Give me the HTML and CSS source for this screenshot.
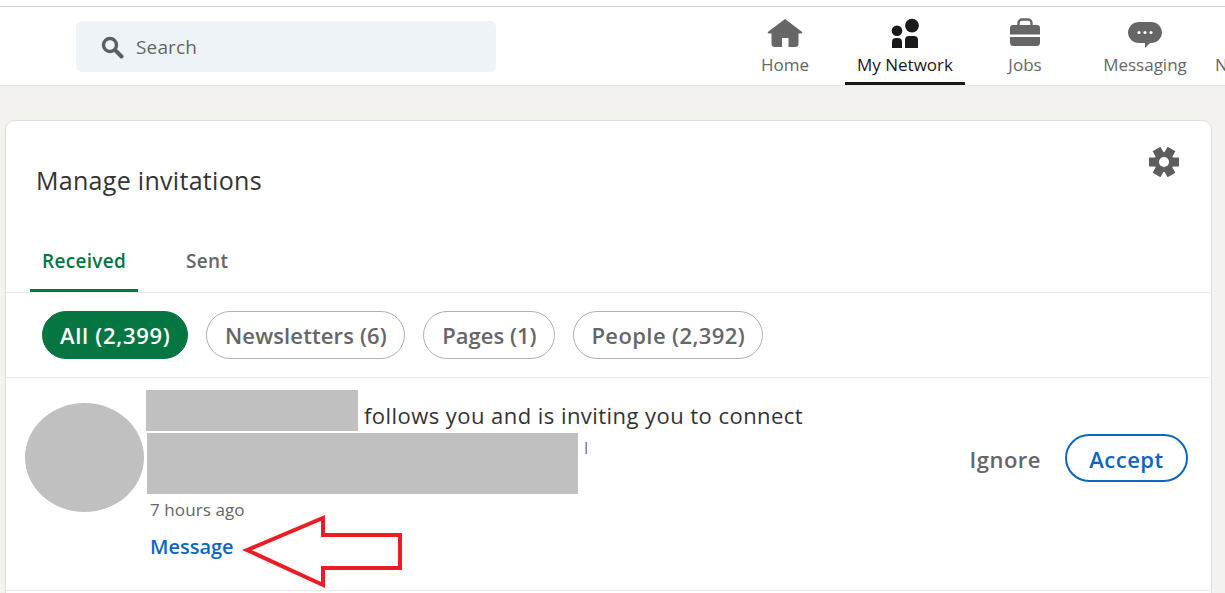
FILE: index.html
```html
<!DOCTYPE html>
<html lang="en">
<head>
    <meta charset="UTF-8">
    <title>Manage invitations</title>
    <link rel="stylesheet" href="styles.css">
</head>
<body>
    <header class="topbar">
        <div class="search">
            <svg class="search-icon" viewBox="0 0 24 24" width="24" height="24"><circle cx="10" cy="10" r="6.500" fill="none" stroke="#5e5e5e" stroke-width="3.400"/><path d="M15 15l6.500 6.500" stroke="#5e5e5e" stroke-width="4" stroke-linecap="round"/></svg>
            <span>Search</span>
        </div>
        <nav class="nav">
            <a class="nav-item">
                <svg viewBox="0 0 36 32" width="36" height="32"><path d="M18 2L1.500 14.500a1 1 0 0 0 .5 2H4.500v10A3.500 3.500 0 0 0 8 30h7V21h6.500v9H28a3.500 3.500 0 0 0 3.500-3.500v-10H34a1 1 0 0 0 .5-2z" fill="#666"/></svg>
                <span>Home</span>
            </a>
            <a class="nav-item active">
                <svg viewBox="0 0 36 32" width="36" height="32"><circle cx="10" cy="13.700" r="5.300" fill="#191919"/><circle cx="25" cy="8.700" r="6.900" fill="#191919"/><path d="M5 31v-6a4 4 0 0 1 4-4h2a4 4 0 0 1 4 4v6zM18 31v-8a4 4 0 0 1 4-4h5a4 4 0 0 1 4 4v8z" fill="#191919"/></svg>
                <span>My Network</span>
            </a>
            <a class="nav-item">
                <svg viewBox="0 0 36 32" width="36" height="32"><path d="M11.500 9V6a3.500 3.500 0 0 1 3.500-3.500h6A3.500 3.500 0 0 1 24.500 6v3" fill="none" stroke="#666" stroke-width="2.400"/><path d="M6 8h24a3 3 0 0 1 3 3v6.500H3V11a3 3 0 0 1 3-3zM3 20h30v5.500a3.500 3.500 0 0 1-3.500 3.500h-23A3.500 3.500 0 0 1 3 25.500z" fill="#666"/></svg>
                <span>Jobs</span>
            </a>
            <a class="nav-item">
                <svg viewBox="0 0 36 32" width="36" height="32"><path d="M12 5h12c6 0 11 4.700 11 10.500S30 26 24 26h-1l-5 5v-5h-6C6 26 1 21.300 1 15.500S6 5 12 5z" fill="#666"/><circle cx="12" cy="15.500" r="1.600" fill="#fff"/><circle cx="18" cy="15.500" r="1.600" fill="#fff"/><circle cx="24" cy="15.500" r="1.600" fill="#fff"/></svg>
                <span>Messaging</span>
            </a>
            <a class="nav-item cut"><span>Notifications</span></a>
        </nav>
    </header>

    <main class="card">
        <div class="card-head">
            <h1>Manage invitations</h1>
            <svg class="gear" viewBox="0 0 30 30" width="30" height="30">
                <g fill="#5e5e5e">
                    <rect x="0" y="10.500" width="30" height="9"/>
                    <rect x="0" y="10.500" width="30" height="9" transform="rotate(60 15 15)"/>
                    <rect x="0" y="10.500" width="30" height="9" transform="rotate(120 15 15)"/>
                    <circle cx="15" cy="15" r="10"/>
                </g>
                <circle cx="15" cy="15" r="5" fill="#fff"/>
            </svg>
        </div>
        <div class="tabs">
            <a class="tab active">Received</a>
            <a class="tab">Sent</a>
        </div>
        <div class="pills">
            <a class="pill on">All (2,399)</a>
            <a class="pill newsletters">Newsletters (6)</a>
            <a class="pill">Pages (1)</a>
            <a class="pill people">People (2,392)</a>
        </div>
        <div class="invite">
            <div class="avatar"></div>
            <div class="invite-body">
                <div class="invite-line">
                    <div class="redact redact-name"></div>
                    <span>follows you and is inviting you to connect</span>
                </div>
                <div class="invite-sub">
                    <div class="redact redact-title"></div>
                    <span class="stray">l</span>
                </div>
                <div class="time">7 hours ago</div>
                <a class="msg">Message</a>
            </div>
            <div class="actions">
                <a class="ignore">Ignore</a>
                <a class="accept">Accept</a>
            </div>
        </div>
    </main>

    <svg class="arrow" viewBox="0 0 170 76" width="170" height="76"><path d="M5 36L81 4v17h77v33H81v17z" fill="#fff" stroke="#ed1c24" stroke-width="4"/></svg>
</body>
</html>
```

FILE: styles.css
```css
* {
    box-sizing: border-box;
}
body {
    margin: 0;
    height: 593px;
    overflow: hidden;
    background: #f3f2ef;
    font-family: 'Open Sans', 'Noto Sans', sans-serif;
    color: #191919;
}
.topbar {
    height: 86px;
    padding: 6px 0 0 76px;
    background: #fff;
    border-bottom: 1px solid #e9e8e5;
    display: flex;
    position: relative;
}
.topbar::before {
    content: "";
    position: absolute;
    left: 0;
    right: 0;
    top: 6px;
    height: 1px;
    background: #cfcfcf;
}
.search {
    width: 420px;
    height: 51px;
    margin-top: 15px;
    padding-left: 24px;
    background: #eef3f8;
    border-radius: 6px;
    display: flex;
    align-items: center;
    gap: 12px;
    font-size: 19px;
    letter-spacing: .15px;
    color: #666;
}
.nav {
    display: flex;
    margin-left: 229px;
    white-space: nowrap;
}
.nav-item {
    width: 120px;
    height: 79px;
    padding-top: 11px;
    display: flex;
    flex-direction: column;
    align-items: center;
    font-size: 17px;
    color: #666;
    border-bottom: 3px solid transparent;
}
.nav-item span {
    margin-top: 5px;
    line-height: 22px;
}
.nav-item.active {
    color: #191919;
    border-bottom-color: #191919;
}
.nav-item.cut {
    width: 20px;
    align-items: flex-start;
    overflow: hidden;
    padding: 43px 0 0 10px;
}
.card {
    margin: 34px 13px 0 5px;
    background: #fff;
    border: 1px solid #e0dfdc;
    border-radius: 10px 10px 0 0;
    height: 500px;
}
.card-head {
    height: 119px;
    padding: 0 32px 0 30px;
    display: flex;
    justify-content: space-between;
}
h1 {
    margin: 43px 0 0;
    font-size: 25px;
    font-weight: 400;
    letter-spacing: .3px;
    line-height: 32px;
    color: #333;
}
.gear {
    margin-top: 26px;
}
.tabs {
    height: 53px;
    padding-left: 24px;
    display: flex;
    border-bottom: 1px solid #ebebeb;
    font-size: 19px;
    font-weight: 600;
    letter-spacing: .3px;
}
.tab {
    padding: 0 12px;
    height: 52px;
    line-height: 42px;
    color: #666;
    margin-right: 36px;
}
.tab.active {
    color: #057642;
    border-bottom: 3px solid #057642;
}
.pills {
    height: 85px;
    padding: 18px 0 0 36px;
    display: flex;
    gap: 18px;
    border-bottom: 1px solid #ebebeb;
}
.pill {
    height: 48px;
    padding: 0 18px;
    border: 1px solid #b0b0b0;
    border-radius: 24px;
    font-size: 22px;
    font-weight: 600;
    line-height: 46px;
    color: #666;
}
.pill.on {
    padding: 0 17px;
    letter-spacing: .7px;
    background: #057642;
    border-color: #057642;
    color: #fff;
}
.pill.newsletters {
    padding: 0 17.500px;
    letter-spacing: .13px;
}
.pill.people {
    padding: 0 17px;
    letter-spacing: .4px;
}
.invite {
    height: 213px;
    border-bottom: 1px solid #ebebeb;
    display: flex;
    padding: 12px 23px 0 19px;
}
.avatar {
    width: 119px;
    height: 109px;
    margin-top: 13px;
    border-radius: 50%;
    background: #c0c0c0;
    flex: none;
}
.invite-body {
    margin-left: 2px;
    flex: 1;
}
.redact {
    background: #c0c0c0;
}
.invite-line {
    display: flex;
    gap: 6px;
    font-size: 22px;
    letter-spacing: .45px;
    line-height: 30px;
    color: #333;
}
.invite-line span {
    margin-top: 10px;
}
.redact-name {
    width: 212px;
    height: 41px;
}
.invite-sub {
    display: flex;
    margin: 2px 0 0 1px;
}
.redact-title {
    width: 431px;
    height: 61px;
}
.stray {
    margin-left: 6px;
    font-size: 17px;
    line-height: 30px;
    color: #777;
}
.time {
    margin: 1px 0 0 4px;
    font-size: 17px;
    letter-spacing: .1px;
    line-height: 30px;
    color: #666;
}
.msg {
    display: block;
    margin: 7px 0 0 4px;
    font-size: 20px;
    line-height: 30px;
    font-weight: 600;
    color: #0a66c2;
}
.actions {
    display: flex;
    align-items: center;
    gap: 24px;
    height: 48px;
    margin-top: 44px;
    font-size: 22px;
    font-weight: 600;
    letter-spacing: .5px;
}
.ignore {
    margin-top: 2px;
    color: #666;
}
.accept {
    width: 123px;
    height: 48px;
    border: 2px solid #0a66c2;
    border-radius: 24px;
    color: #0a66c2;
    line-height: 46px;
    text-align: center;
}
/* red annotation drawn over the screenshot */
.arrow {
    position: absolute;
    left: 242px;
    top: 514px;
}
```
